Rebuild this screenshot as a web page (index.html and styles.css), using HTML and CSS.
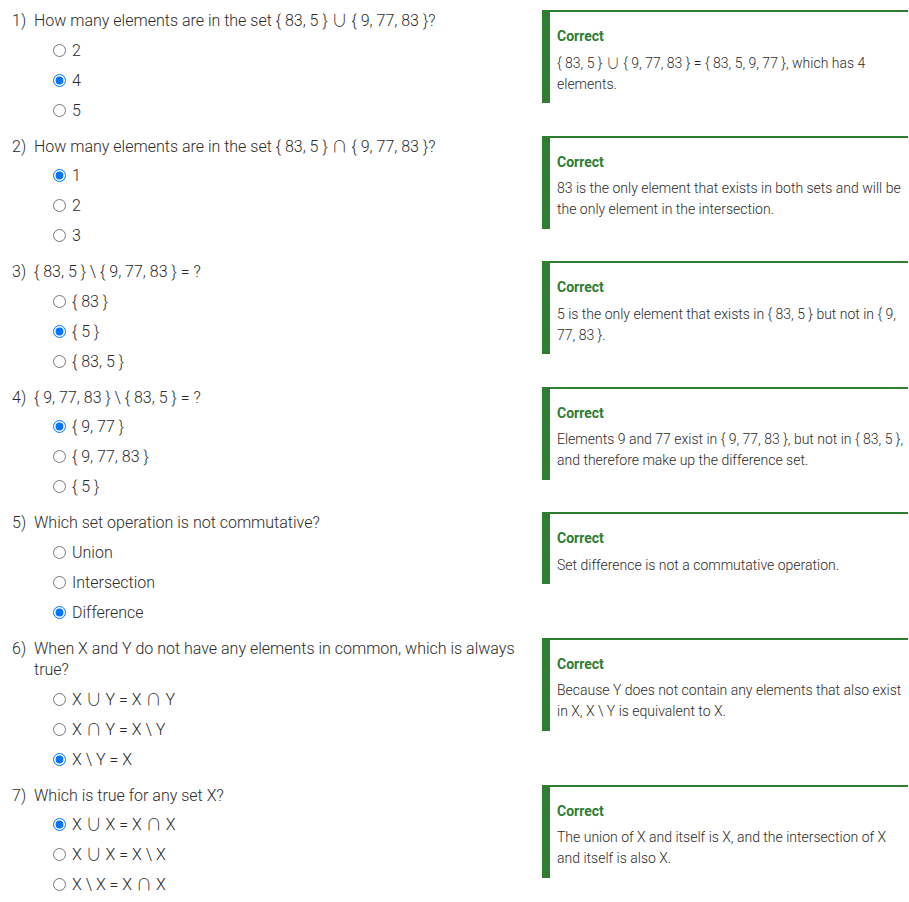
FILE: index.html
```html
<!DOCTYPE html>
<html lang="en">
<head>
<meta charset="utf-8">
<title>Set operations quiz</title>
<link rel="stylesheet" href="styles.css">
</head>
<body>
<main class="quiz">
  <section class="item">
    <div class="question">
      <p class="prompt"><span class="num">1)</span><span class="text">How many elements are in the set { 83, 5 } <span class="sym">∪</span> { 9, 77, 83 }?</span></p>
      <ul class="options">
        <li class="option"><input type="radio" name="q1"><span>2</span></li>
        <li class="option"><input type="radio" name="q1" checked><span>4</span></li>
        <li class="option"><input type="radio" name="q1"><span>5</span></li>
      </ul>
    </div>
    <div class="feedback">
      <p class="status">Correct</p>
      <p class="explain">{ 83, 5 } <span class="sym">∪</span> { 9, 77, 83 } = { 83, 5, 9, 77 }, which has 4 elements.</p>
    </div>
  </section>

  <section class="item">
    <div class="question">
      <p class="prompt"><span class="num">2)</span><span class="text">How many elements are in the set { 83, 5 } <span class="sym">∩</span> { 9, 77, 83 }?</span></p>
      <ul class="options">
        <li class="option"><input type="radio" name="q2" checked><span>1</span></li>
        <li class="option"><input type="radio" name="q2"><span>2</span></li>
        <li class="option"><input type="radio" name="q2"><span>3</span></li>
      </ul>
    </div>
    <div class="feedback">
      <p class="status">Correct</p>
      <p class="explain">83 is the only element that exists in both sets and will be the only element in the intersection.</p>
    </div>
  </section>

  <section class="item">
    <div class="question">
      <p class="prompt"><span class="num">3)</span><span class="text">{ 83, 5 } \ { 9, 77, 83 } = ?</span></p>
      <ul class="options">
        <li class="option"><input type="radio" name="q3"><span>{ 83 }</span></li>
        <li class="option"><input type="radio" name="q3" checked><span>{ 5 }</span></li>
        <li class="option"><input type="radio" name="q3"><span>{ 83, 5 }</span></li>
      </ul>
    </div>
    <div class="feedback">
      <p class="status">Correct</p>
      <p class="explain">5 is the only element that exists in { 83, 5 } but not in { 9, 77, 83 }.</p>
    </div>
  </section>

  <section class="item">
    <div class="question">
      <p class="prompt"><span class="num">4)</span><span class="text">{ 9, 77, 83 } \ { 83, 5 } = ?</span></p>
      <ul class="options">
        <li class="option"><input type="radio" name="q4" checked><span>{ 9, 77 }</span></li>
        <li class="option"><input type="radio" name="q4"><span>{ 9, 77, 83 }</span></li>
        <li class="option"><input type="radio" name="q4"><span>{ 5 }</span></li>
      </ul>
    </div>
    <div class="feedback">
      <p class="status">Correct</p>
      <p class="explain">Elements 9 and 77 exist in { 9, 77, 83 }, but not in { 83, 5 }, and therefore make up the difference set.</p>
    </div>
  </section>

  <section class="item">
    <div class="question">
      <p class="prompt"><span class="num">5)</span><span class="text">Which set operation is not commutative?</span></p>
      <ul class="options">
        <li class="option"><input type="radio" name="q5"><span>Union</span></li>
        <li class="option"><input type="radio" name="q5"><span>Intersection</span></li>
        <li class="option"><input type="radio" name="q5" checked><span>Difference</span></li>
      </ul>
    </div>
    <div class="feedback">
      <p class="status">Correct</p>
      <p class="explain">Set difference is not a commutative operation.</p>
    </div>
  </section>

  <section class="item">
    <div class="question">
      <p class="prompt"><span class="num">6)</span><span class="text">When X and Y do not have any elements in common, which is always true?</span></p>
      <ul class="options">
        <li class="option"><input type="radio" name="q6"><span>X <span class="sym">∪</span> Y = X <span class="sym">∩</span> Y</span></li>
        <li class="option"><input type="radio" name="q6"><span>X <span class="sym">∩</span> Y = X \ Y</span></li>
        <li class="option"><input type="radio" name="q6" checked><span>X \ Y = X</span></li>
      </ul>
    </div>
    <div class="feedback">
      <p class="status">Correct</p>
      <p class="explain">Because Y does not contain any elements that also exist in X, X \ Y is equivalent to X.</p>
    </div>
  </section>

  <section class="item">
    <div class="question">
      <p class="prompt"><span class="num">7)</span><span class="text">Which is true for any set X?</span></p>
      <ul class="options">
        <li class="option"><input type="radio" name="q7" checked><span>X <span class="sym">∪</span> X = X <span class="sym">∩</span> X</span></li>
        <li class="option"><input type="radio" name="q7"><span>X <span class="sym">∪</span> X = X \ X</span></li>
        <li class="option"><input type="radio" name="q7"><span>X \ X = X <span class="sym">∩</span> X</span></li>
      </ul>
    </div>
    <div class="feedback">
      <p class="status">Correct</p>
      <p class="explain">The union of X and itself is X, and the intersection of X and itself is also X.</p>
    </div>
  </section>
</main>
</body>
</html>
```

FILE: styles.css
```css
html, body {
  margin: 0;
  padding: 0;
  background: #ffffff;
}

body {
  font-family: Roboto, "Liberation Sans", "DejaVu Sans", sans-serif;
  font-weight: 300;
  color: #2b2b2b;
}

.quiz {
  padding-top: 10px;
}

.item {
  display: flex;
  align-items: flex-start;
  margin-bottom: 10.5px;
}

.question {
  width: 530px;
  flex: none;
}

.prompt {
  display: flex;
  margin: 0;
  padding-left: 12px;
  font-size: 16px;
  line-height: 21.5px;
}

.num {
  width: 22px;
  flex: none;
}

.sym {
  font-family: "Noto Sans CJK SC", "DejaVu Sans", sans-serif;
  font-weight: 300;
  line-height: 1;
}

.options {
  list-style: none;
  margin: 3.5px 0 0;
  padding: 0 0 0 53px;
}

.option {
  display: flex;
  align-items: center;
  gap: 6px;
  height: 30px;
  font-size: 16px;
}

.option input {
  margin: 0;
  width: 13px;
  height: 13px;
  flex: none;
}

.feedback {
  margin-left: 12px;
  width: 366px;
  flex: none;
  box-sizing: border-box;
  border-left: 8px solid #2e7d32;
  border-top: 2px solid #2e7d32;
  padding: 14px 0 8.5px 7px;
  font-size: 14px;
}

.status {
  margin: 0;
  font-weight: 700;
  color: #2e7d32;
  line-height: 20px;
}

.explain {
  margin: 6.5px 0 0;
  line-height: 21px;
}
```
